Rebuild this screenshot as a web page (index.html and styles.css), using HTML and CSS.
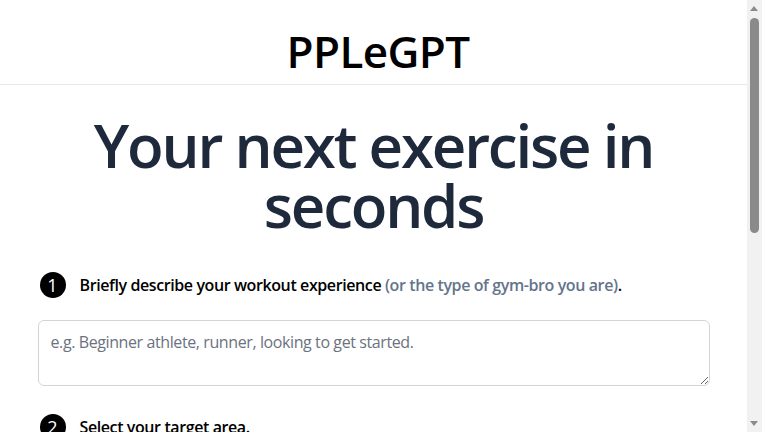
FILE: index.html
```html
<!DOCTYPE html>
<html lang="en">
<head>
<meta charset="utf-8">
<title>PPLeGPT</title>
<link rel="stylesheet" href="styles.css">
</head>
<body>
<header class="site-header">
  <h1 class="logo">PPLeGPT</h1>
</header>
<main class="main">
  <h2 class="hero">Your next exercise in seconds</h2>
  <section class="form">
    <div class="step step-first">
      <span class="badge">1</span>
      <p class="step-label">Briefly describe your workout experience <span class="muted">(or the type of gym-bro you are)</span>.</p>
    </div>
    <textarea class="input" rows="3" placeholder="e.g. Beginner athlete, runner, looking to get started."></textarea>
    <div class="step step-next">
      <span class="badge">2</span>
      <p class="step-label">Select your target area.</p>
    </div>
    <div class="spacer"></div>
  </section>
</main>
<div class="scrollbar" aria-hidden="true">
  <span class="arrow arrow-up"></span>
  <span class="thumb"></span>
  <span class="arrow arrow-down"></span>
</div>
</body>
</html>
```
FILE: styles.css
```css
* { box-sizing: border-box; }
html, body { margin: 0; padding: 0; }
body {
  font-family: "Open Sans", "Noto Sans", sans-serif;
  background: #ffffff;
  color: #000;
  padding-right: 15px;
}
.site-header {
  display: flex;
  justify-content: center;
  padding: 23px 0 0 9px;
  height: 85px;
  border-bottom: 1px solid #e5e7eb;
}
.logo {
  margin: 0;
  font-size: 44px;
  font-weight: 600;
  line-height: 56px;
  letter-spacing: -0.6px;
}
.main {
  max-width: 672px;
  margin: 0 auto;
  display: flex;
  flex-direction: column;
  align-items: center;
}
.hero {
  margin: 30px 0 0;
  text-align: center;
  font-size: 60px;
  line-height: 60px;
  font-weight: 600;
  color: #1e293b;
  letter-spacing: -2.2px;
}
.form {
  width: 100%;
  display: flex;
  flex-direction: column;
}
.step {
  display: flex;
  align-items: center;
  gap: 14px;
  padding-left: 2px;
}
.step-first { margin-top: 37px; }
.step-next { margin-top: 28px; }
.badge {
  flex: none;
  width: 26px;
  height: 26px;
  border-radius: 50%;
  background: #000;
  color: #fff;
  display: flex;
  align-items: center;
  justify-content: center;
  font-size: 18px;
  font-weight: 500;
}
.step-label {
  margin: 0;
  font-size: 16px;
  font-weight: 600;
  letter-spacing: -0.4px;
}
.muted { color: #64748b; }
.input {
  margin-top: 22px;
  width: 100%;
  height: 66px;
  border: 1px solid #d1d5db;
  border-radius: 6px;
  padding: 10px 12px;
  font-family: inherit;
  font-size: 16px;
  letter-spacing: -0.4px;
  resize: vertical;
}
.input::placeholder { color: #6b7280; }
.spacer { height: 400px; }
.scrollbar {
  position: fixed;
  top: 0;
  right: 0;
  width: 15px;
  height: 100vh;
  background: #f1f1f1;
}
.thumb {
  position: absolute;
  left: 3px;
  top: 18px;
  width: 9px;
  height: 215px;
  border-radius: 5px;
  background: #8a8a8a;
}
.arrow {
  position: absolute;
  left: 3px;
  width: 0;
  height: 0;
  border-left: 4.5px solid transparent;
  border-right: 4.5px solid transparent;
}
.arrow-up { top: 6px; border-bottom: 5px solid #8a8a8a; }
.arrow-down { bottom: 6px; border-top: 5px solid #8a8a8a; }
```
